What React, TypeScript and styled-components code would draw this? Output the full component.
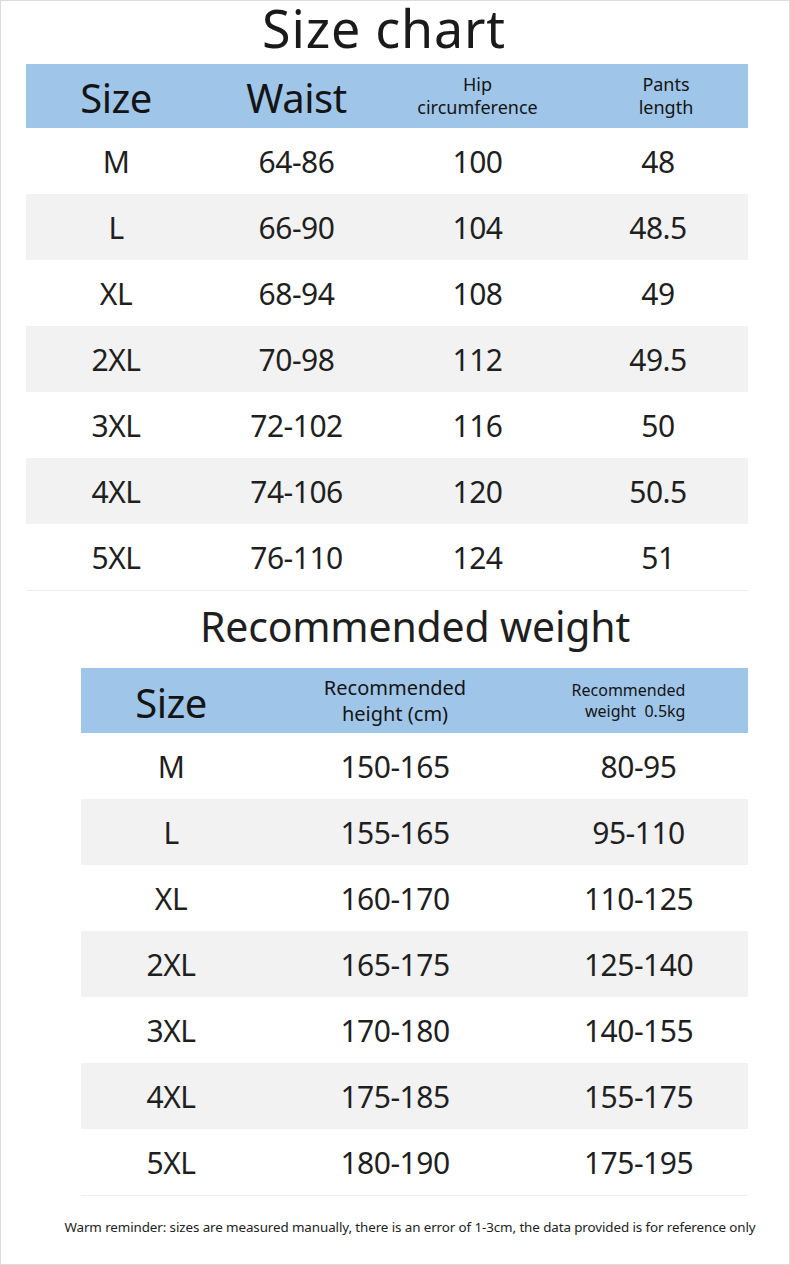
import styled, { createGlobalStyle } from "styled-components";

const GlobalStyle = createGlobalStyle`
  html, body {
    margin: 0;
    padding: 0;
    background: #ffffff;
  }
  body {
    font-family: "Noto Sans", "Open Sans", sans-serif;
    color: #1f1f1f;
  }
`;

const Page = styled.div`
  width: 790px;
  height: 1265px;
  box-sizing: border-box;
  border: 1px solid #dcdcdc;
  background: #fff;
  overflow: hidden;
`;

const Title = styled.h1`
  margin: 0;
  height: 63px;
  font-size: 52px;
  font-weight: 400;
  line-height: 54px;
  letter-spacing: 0.8px;
  text-align: center;
  color: #1a1a1a;
  padding-right: 22px;
`;

const SubTitle = styled.h2`
  margin: 0;
  height: 77px;
  font-size: 41px;
  font-weight: 400;
  line-height: 70px;
  letter-spacing: -0.2px;
  text-align: center;
  color: #1f1f1f;
  padding-left: 40px;
`;

const Table = styled.div<{ $cols: string; $left: number }>`
  display: grid;
  grid-template-columns: ${(p) => p.$cols};
  margin-left: ${(p) => p.$left}px;
  width: ${(p) => 747 - p.$left}px;
  border-bottom: 1px solid #eeeeee;
`;

const HeadCell = styled.div<{ $size: number; $shift?: number; $h?: number }>`
  height: ${(p) => p.$h ?? 65}px;
  background: #9fc5e8;
  display: flex;
  align-items: center;
  justify-content: center;
  text-align: center;
  font-size: ${(p) => p.$size}px;
  line-height: ${(p) => (p.$size > 30 ? 1 : 1.3)};
  letter-spacing: ${(p) => (p.$size > 30 ? "-0.5px" : "0")};
  color: #141414;
  padding-left: ${(p) => Math.max(p.$shift ?? 0, 0)}px;
  padding-right: ${(p) => Math.max(-(p.$shift ?? 0), 0)}px;
  padding-top: ${(p) => (p.$size > 30 ? 4 : 0)}px;
  box-sizing: border-box;
`;

const WeightHead = styled.span`
  text-align: right;
`;

const Cell = styled.div<{ $alt: boolean }>`
  height: 66px;
  background: ${(p) => (p.$alt ? "#f2f2f2" : "#ffffff")};
  display: flex;
  align-items: center;
  justify-content: center;
  font-size: 30px;
  letter-spacing: -0.5px;
  color: #1f1f1f;
`;

const Footer = styled.p`
  margin: 0;
  height: 69px;
  line-height: 62px;
  font-size: 13.4px;
  letter-spacing: -0.1px;
  text-align: center;
  padding-left: 30px;
  color: #222;
  white-space: nowrap;
`;

const chart = [
  ["M", "64-86", "100", "48"],
  ["L", "66-90", "104", "48.5"],
  ["XL", "68-94", "108", "49"],
  ["2XL", "70-98", "112", "49.5"],
  ["3XL", "72-102", "116", "50"],
  ["4XL", "74-106", "120", "50.5"],
  ["5XL", "76-110", "124", "51"],
];

const weights = [
  ["M", "150-165", "80-95"],
  ["L", "155-165", "95-110"],
  ["XL", "160-170", "110-125"],
  ["2XL", "165-175", "125-140"],
  ["3XL", "170-180", "140-155"],
  ["4XL", "175-185", "155-175"],
  ["5XL", "180-190", "175-195"],
];

export default function App() {
  return (
    <Page>
      <GlobalStyle />
      <Title>Size chart</Title>
      <Table $cols="180px 181px 181px 180px" $left={25}>
        <HeadCell $size={40} $h={64}>
          Size
        </HeadCell>
        <HeadCell $size={40} $h={64}>
          Waist
        </HeadCell>
        <HeadCell $size={18} $h={64}>
          Hip
          <br />
          circumference
        </HeadCell>
        <HeadCell $size={18} $h={64} $shift={16}>
          Pants
          <br />
          length
        </HeadCell>
        {chart.map((row, i) =>
          row.map((v, j) => (
            <Cell key={`${i}-${j}`} $alt={i % 2 === 1}>
              {v}
            </Cell>
          ))
        )}
      </Table>
      <SubTitle>Recommended weight</SubTitle>
      <Table $cols="180px 268px 219px" $left={80}>
        <HeadCell $size={40}>Size</HeadCell>
        <HeadCell $size={20}>
          Recommended
          <br />
          height (cm)
        </HeadCell>
        <HeadCell $size={16} $shift={-20}>
          <WeightHead>
            Recommended
            <br />
            weight&nbsp; 0.5kg
          </WeightHead>
        </HeadCell>
        {weights.map((row, i) =>
          row.map((v, j) => (
            <Cell key={`${i}-${j}`} $alt={i % 2 === 1}>
              {v}
            </Cell>
          ))
        )}
      </Table>
      <Footer>
        Warm reminder: sizes are measured manually, there is an error of 1-3cm, the data provided is for
        reference only
      </Footer>
    </Page>
  );
}
